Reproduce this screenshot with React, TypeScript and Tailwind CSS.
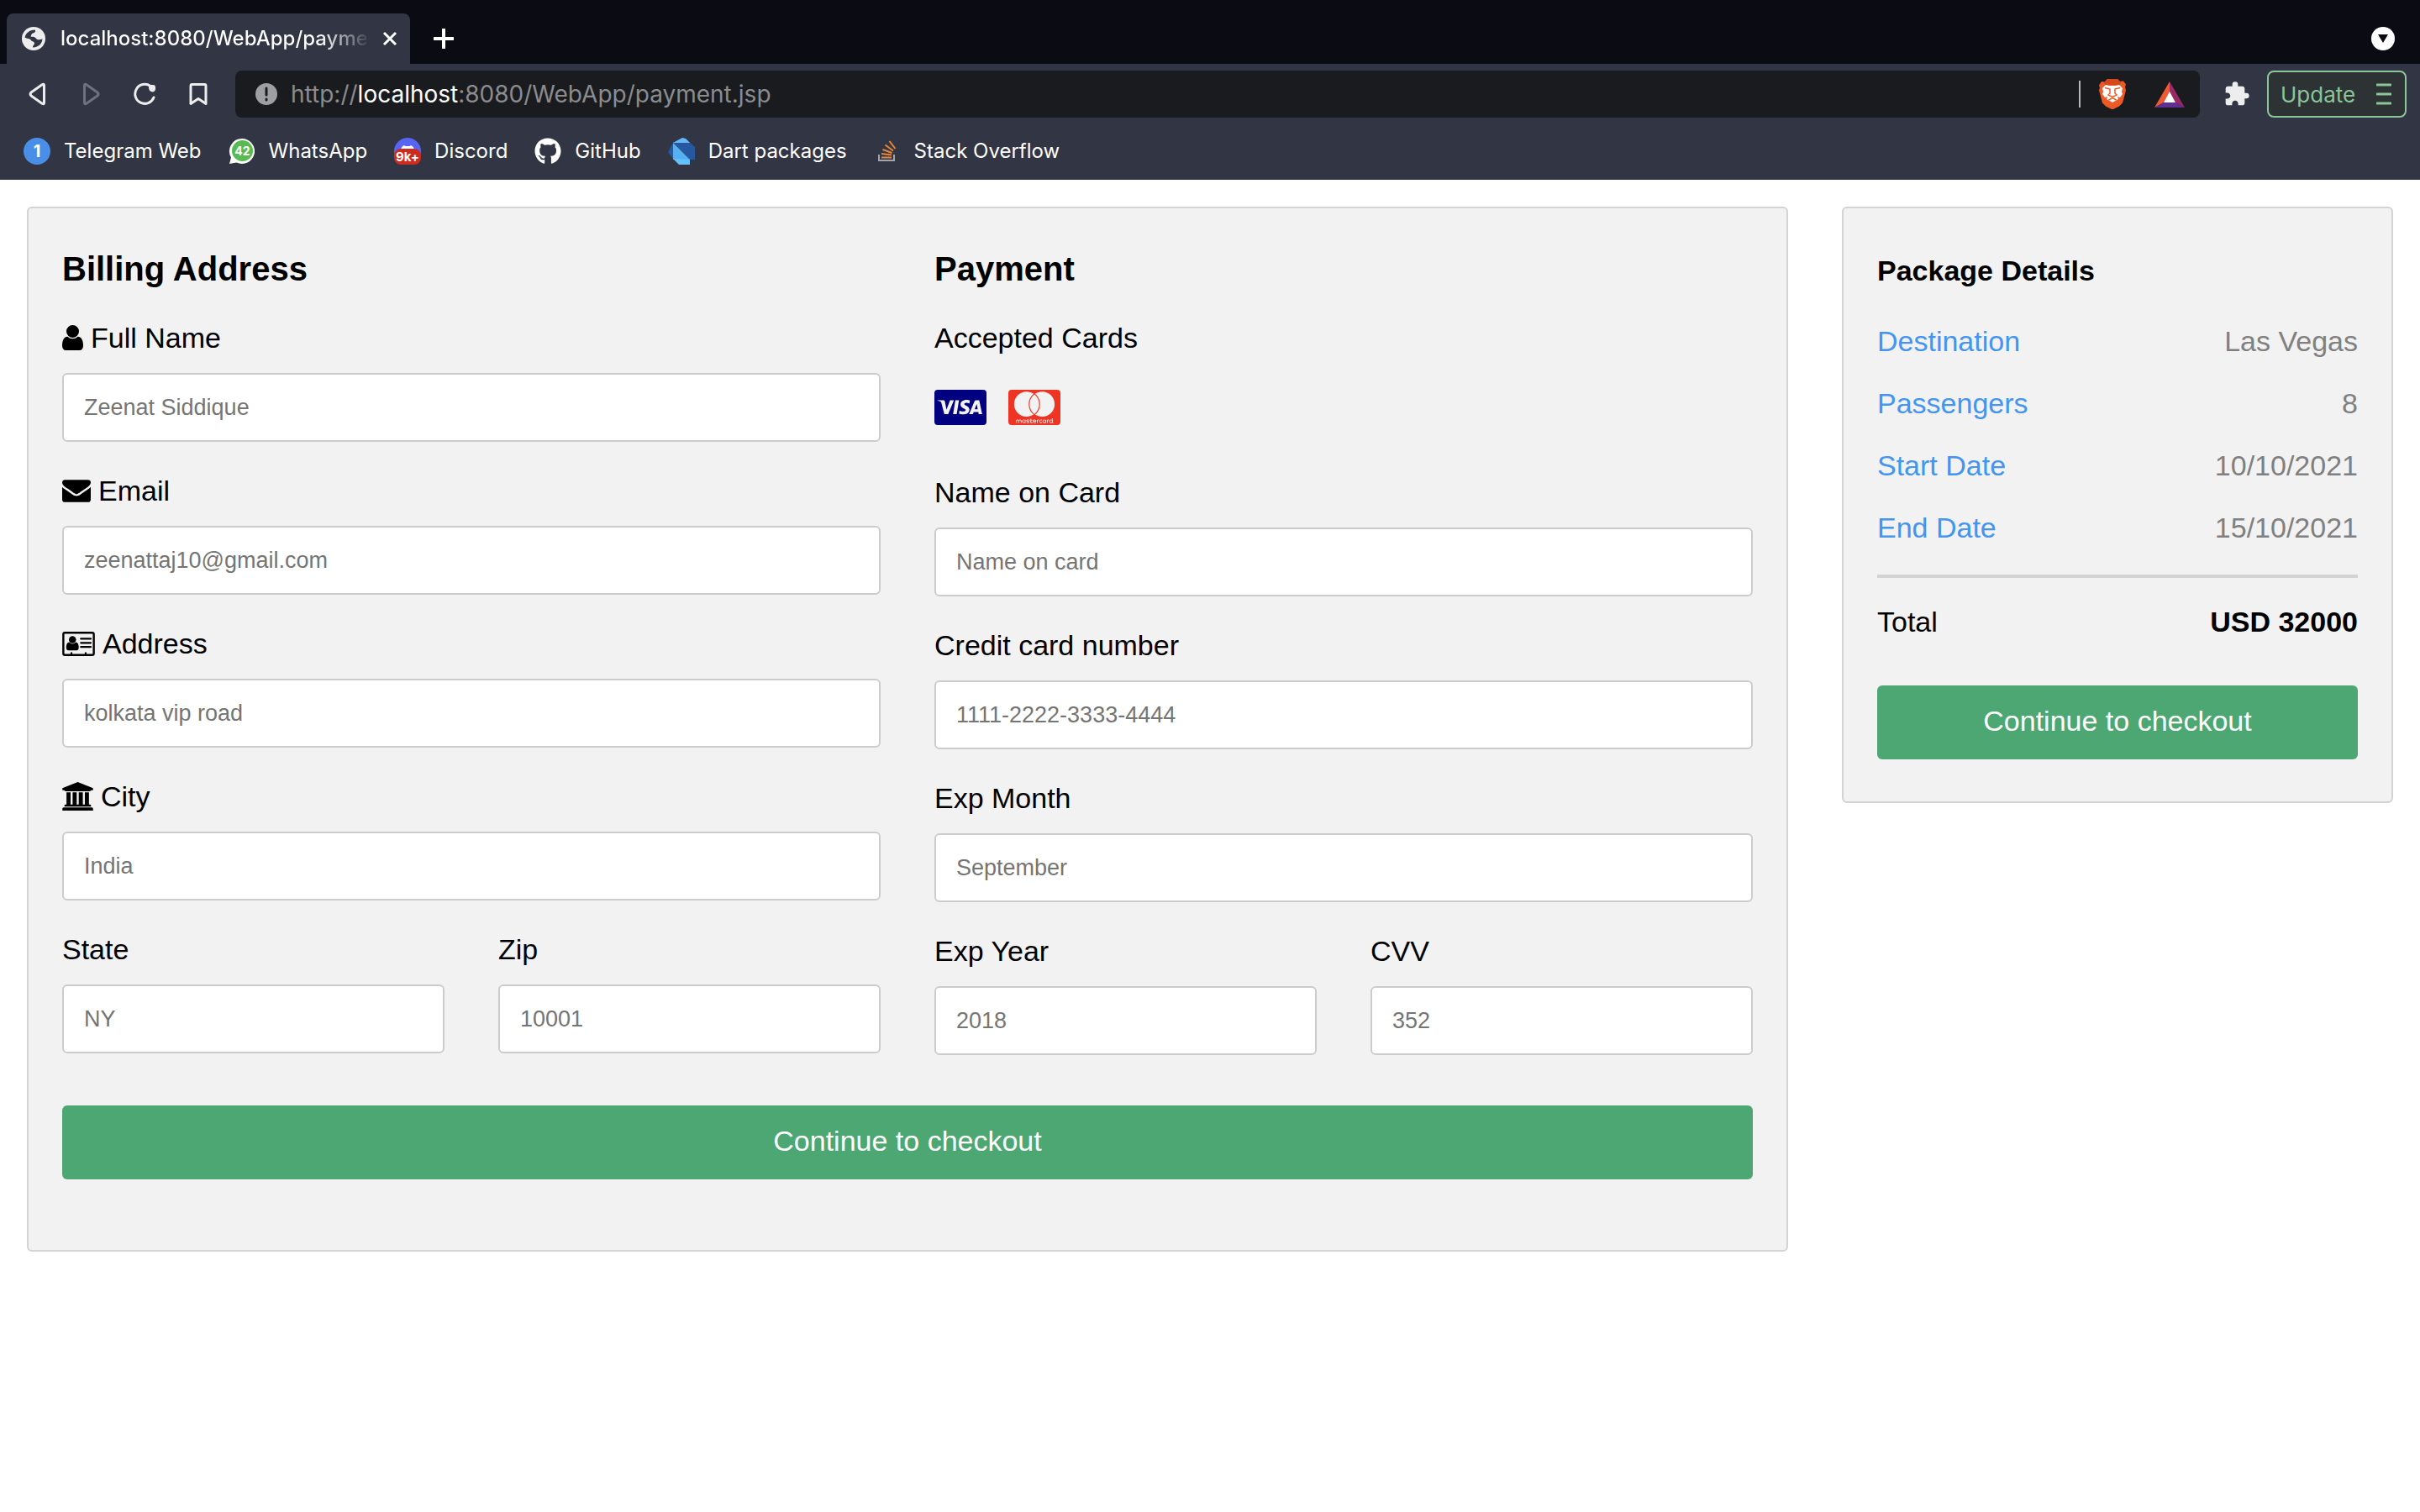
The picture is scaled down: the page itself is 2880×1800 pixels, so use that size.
import React from "react";
import { FaCcVisa, FaCcMastercard, FaGithub } from "react-icons/fa";
import { MdExtension } from "react-icons/md";

function UserIcon() {
  return (
    <svg viewBox="256 128 1280 1536" className="h-[30px] w-[25px]" aria-hidden="true">
      <path d="M1536 1399q0 109-62.5 187t-150.5 78h-854q-88 0-150.5-78t-62.5-187q0-85 8.5-160.5t31.5-152 58.5-131 94-89 134.5-34.5q131 128 313 128t313-128q76 0 134.5 34.5t94 89 58.5 131 31.5 152 8.5 160.5zm-256-887q0 159-112.5 271.5t-271.5 112.5-271.5-112.5-112.5-271.5 112.5-271.5 271.5-112.5 271.5 112.5 112.5 271.5z" />
    </svg>
  );
}

function EnvelopeIcon() {
  return (
    <svg viewBox="0 256 1792 1408" className="h-[27px] w-[34px]" aria-hidden="true">
      <path d="M1792 710v794q0 66-47 113t-113 47h-1472q-66 0-113-47t-47-113v-794q44 49 101 87 362 246 497 345 57 42 92.5 65.5t94.5 48 110 24.5h2q51 0 110-24.5t94.5-48 92.5-65.5q170-123 498-345 57-39 100-87zm0-294q0 79-49 151t-122 123q-376 261-468 325-10 7-42.5 31t-54 38.5-52 32.5-57.5 27-50 9h-2q-23 0-50-9t-57.5-27-52-32.5-54-38.5-42.5-31q-91-64-262-182.5t-205-142.5q-62-42-117-115.5t-55-136.5q0-78 41.500-130t118.500-52h1472q65 0 112.500 47t47.500 113z" />
    </svg>
  );
}

function AddressIcon() {
  return (
    <svg viewBox="0 0 2048 1536" className="h-[29px] w-[39px]" aria-hidden="true">
      <rect x="64" y="64" width="1920" height="1408" rx="96" fill="none" stroke="#000" strokeWidth="128" />
      <circle cx="640" cy="500" r="226" />
      <path d="M436 660q90 110 204 110t204-110q190 20 190 330 0 182-130 182h-528q-130 0-130-182 0-310 190-330z" />
      <path d="M1172 448h620M1172 704h620M1172 960h620" stroke="#000" strokeWidth="120" strokeLinecap="round" />
      <path d="M576 1300v140M1472 1300v140" stroke="#000" strokeWidth="110" />
    </svg>
  );
}

function BankIcon() {
  return (
    <svg viewBox="0 0 1920 1792" className="h-[34px] w-[37px]" aria-hidden="true">
      <path d="M960 0l960 384v128h-128q0 26-20.500 45t-48.500 19h-1526q-28 0-48.500-19t-20.500-45h-128v-128zm-704 640h256v768h128v-768h256v768h128v-768h256v768h128v-768h256v768h59q28 0 48.500 19t20.500 45v64h-1664v-64q0-26 20.500-45t48.500-19h59v-768zm1595 960q28 0 48.500 19t20.500 45v128h-1920v-128q0-26 20.500-45t48.500-19h1782z" />
    </svg>
  );
}

function Field({
  id,
  label,
  placeholder,
  icon,
}: {
  id: string;
  label: string;
  placeholder: string;
  icon?: React.ReactNode;
}) {
  return (
    <div className="min-w-0">
      <label htmlFor={id} className="mb-6 flex h-9 items-center gap-[9px] text-[34px] leading-9">
        {icon}
        {label}
      </label>
      <input
        id={id}
        type="text"
        placeholder={placeholder}
        className="mb-10 block h-[82px] w-full rounded-md border-2 border-[#cccccc] bg-white px-6 text-[27px] text-black placeholder:text-[#757575]"
      />
    </div>
  );
}

function CheckoutButton() {
  return (
    <button
      type="button"
      className="block h-[88px] w-full rounded-md bg-[#4ca773] pb-1 text-center text-[34px] text-white"
    >
      Continue to checkout
    </button>
  );
}

function GlobeIcon() {
  return (
    <svg viewBox="0 0 28 28" className="size-7 shrink-0" aria-hidden="true">
      <circle cx="14" cy="14" r="14" fill="#ededee" />
      <path
        d="M3.500 12.500C5 7 9 4 15.500 3.500C17 5 15.500 7 13 7.500C11 8 11.500 10 10.500 11.500C13 12 16 11.500 17 14C19 16 21 15 24.500 14.500C24 20 20 24 13.500 24.500C12 23 15 21.500 15 19.500C15 17 12 18 11 16C10 13.500 6 14.500 3.500 12.500z"
        fill="#323543"
      />
    </svg>
  );
}

function TelegramBadge() {
  return (
    <span className="flex size-8 items-center justify-center rounded-full bg-[#4a8fe7] text-xl font-bold">1</span>
  );
}

function WhatsAppBadge() {
  return (
    <svg viewBox="0 0 32 32" className="size-8" aria-hidden="true">
      <path d="M16 1a15 15 0 1 1-6.500 28.500L1 31l2-7.500A15 15 0 0 1 16 1z" fill="#fff" />
      <circle cx="16.500" cy="15.500" r="12.500" fill="#57bb52" />
      <text x="16.500" y="20.500" textAnchor="middle" fontSize="14" fontWeight="700" fill="#fff">42</text>
    </svg>
  );
}

function DiscordBadge() {
  return (
    <svg viewBox="0 0 32 32" className="size-8" aria-hidden="true">
      <circle cx="16" cy="16" r="16" fill="#5865f2" />
      <path d="M8 14q1-4 4-5l1.500 1h5L20 9q3 1 4 5z" fill="#fff" />
      <rect x="0" y="13" width="32" height="19" rx="8" fill="#cc2b20" />
      <text x="16" y="28" textAnchor="middle" fontSize="15" fontWeight="700" fill="#fff">9k+</text>
    </svg>
  );
}

function DartIcon() {
  return (
    <svg viewBox="0 0 32 32" className="size-8" aria-hidden="true">
      <path d="M6 6l11-6 4 1 11 10v15h-6z" fill="#25589f" />
      <path d="M6 6L0 17l6 8z" fill="#25589f" />
      <path d="M6 6l20 20H6z" fill="#55b0f0" />
      <path d="M6 6l11-6 4 1 5 5z" fill="#66b9f5" />
      <path d="M6 25l7 7h13v-6z" fill="#66c0fb" />
    </svg>
  );
}

function StackOverflowIcon() {
  return (
    <svg viewBox="0 0 32 32" className="size-8" aria-hidden="true">
      <path d="M6 20v7h18v-7" fill="none" stroke="#a3a5ad" strokeWidth="2" />
      <path d="M9 23.500h12M9 19l12 1.500M10.500 14l11 4M13.500 8.500l9.500 7M18.500 4l7 9" stroke="#e8873a" strokeWidth="2" />
    </svg>
  );
}

const bookmarks = [
  { name: "Telegram Web", icon: <TelegramBadge /> },
  { name: "WhatsApp", icon: <WhatsAppBadge /> },
  { name: "Discord", icon: <DiscordBadge /> },
  { name: "GitHub", icon: <FaGithub className="size-8" /> },
  { name: "Dart packages", icon: <DartIcon /> },
  { name: "Stack Overflow", icon: <StackOverflowIcon /> },
];

function BrowserChrome() {
  return (
    <header className="bg-[#323543] font-['Inter',sans-serif] text-white">
      <div className="flex h-[76px] items-end justify-between bg-[#0b0b14] pl-2 pr-[30px]">
        <div className="flex items-center">
          <div className="mt-4 flex h-[60px] w-[480px] items-center rounded-t-lg bg-[#323543] pl-[18px] pr-2.5">
            <GlobeIcon />
            <span className="ml-[18px] w-[366px] overflow-hidden whitespace-nowrap bg-linear-to-r from-white from-85% to-white/10 bg-clip-text text-2xl font-medium text-transparent">
              localhost:8080/WebApp/payment.jsp
            </span>
            <button type="button" aria-label="Close tab" className="ml-3.5 p-1">
              <svg viewBox="0 0 20 20" className="size-5" aria-hidden="true">
                <path d="M3 3l14 14M17 3L3 17" stroke="#fff" strokeWidth="3" />
              </svg>
            </button>
          </div>
          <button type="button" aria-label="New tab" className="ml-7 mt-4">
            <svg viewBox="0 0 24 24" className="size-6" aria-hidden="true">
              <path d="M12 1v22M1 12h22" stroke="#fff" strokeWidth="4" strokeLinecap="round" />
            </svg>
          </button>
        </div>
        <button type="button" aria-label="Search tabs" className="mb-4 flex size-7 items-center justify-center rounded-full bg-white">
          <svg viewBox="0 0 12 10" className="h-2.5 w-3" aria-hidden="true">
            <path d="M0 0h12L6 10z" fill="#0b0b14" />
          </svg>
        </button>
      </div>

      <div className="flex h-18 items-center pl-[30px] pr-4">
        <button type="button" aria-label="Back">
          <svg viewBox="0 0 28 28" className="size-7" aria-hidden="true">
            <path d="M22.500 3.500v21q0 2-2 1L7 16q-2-2 0-4l13.500-9.500q2-1 2 1z" fill="none" stroke="#ededee" strokeWidth="3" strokeLinejoin="round" />
          </svg>
        </button>
        <button type="button" aria-label="Forward" className="ml-9">
          <svg viewBox="0 0 28 28" className="size-7" aria-hidden="true">
            <path d="M6.500 3.500v21q0 2 2 1L22 16q2-2 0-4L8.500 2.500q-2-1-2 1z" fill="none" stroke="#6f717b" strokeWidth="3" strokeLinejoin="round" />
          </svg>
        </button>
        <button type="button" aria-label="Reload" className="ml-9">
          <svg viewBox="0 0 28 28" className="size-7" aria-hidden="true">
            <path d="M25 18A11.500 11.500 0 1 1 21 4.500" fill="none" stroke="#ededee" strokeWidth="3" strokeLinecap="round" />
            <path d="M19 6.500q0-3 3-3.500h2q3 0 3 3v1.500q0 3.500-3.500 4Q19.500 11 19 6.500z" fill="#ededee" />
          </svg>
        </button>
        <button type="button" aria-label="Bookmark this page" className="ml-9">
          <svg viewBox="0 0 28 28" className="size-7" aria-hidden="true">
            <path d="M6.500 2.500h15q1.500 0 1.500 1.500v21.500l-9-6-9 6V4q0-1.500 1.500-1.500z" fill="none" stroke="#ededee" strokeWidth="3" strokeLinejoin="round" />
          </svg>
        </button>
        <div className="ml-[30px] flex h-14 min-w-0 flex-1 items-center rounded-lg bg-[#1a1b1f] pl-6 pr-[18px]">
          <svg viewBox="0 0 26 26" className="size-[26px] shrink-0" aria-hidden="true">
            <circle cx="13" cy="13" r="13" fill="#9c9fa4" />
            <path d="M13 6v8M13 19v1" stroke="#1a1b1f" strokeWidth="3" strokeLinecap="round" />
          </svg>
          <a href="http://localhost:8080/WebApp/payment.jsp" className="ml-4 flex-1 truncate text-[28px] text-[#8b8c8f]">
            http://<span className="text-white">localhost</span>:8080/WebApp/payment.jsp
          </a>
          <span className="h-8 w-0.5 bg-[#b5b5b8]" />
          <svg viewBox="0 0 32 36" className="ml-[22px] h-9 w-8" aria-hidden="true">
            <path d="M10 0h12l3 3 4-.5 3 4-1 3 1 4-4 15-4 4-8 4-8-4-4-4L0 13.500l1-3-1-3 3-4.500 4 .5z" fill="#ee5a26" />
            <path d="M10 0h12l4 4-1 3H7L6 4z" fill="#d4481c" />
            <path d="M4 11l4-4 4 1h8l4-1 4 4-1 4 1 3-3 4-3-1 1 3-7 4-7-4 1-3-3 1-3-4 1-3z" fill="#fff" />
            <path d="M7 10.500l6 1.500v5l-2 2 5 2.500 5-2.500-2-2v-5l6-1.500M11.500 25l4.500-2.500 4.500 2.500" fill="none" stroke="#ee5a26" strokeWidth="1.500" />
          </svg>
          <svg viewBox="0 0 36 31" className="ml-[34px] h-[31px] w-9" aria-hidden="true">
            <path d="M18 0L0 31l11-6 7-12z" fill="#ee5a33" />
            <path d="M18 0l18 31-11-6-7-12z" fill="#972a62" />
            <path d="M0 31h36l-11-6H11z" fill="#5f2f92" />
            <path d="M18 12l7 13H11z" fill="#fff" />
          </svg>
        </div>
        <button type="button" aria-label="Extensions" className="ml-7">
          <MdExtension className="size-8 text-[#ededee]" />
        </button>
        <button
          type="button"
          className="ml-5 flex h-14 w-[166px] items-center justify-between rounded-lg border-2 border-[#8cc597] bg-[#2d3234] pl-3.5 pr-4 text-[26px] text-[#8cc597]"
        >
          Update
          <svg viewBox="0 0 18 26" className="h-[26px] w-[18px]" aria-hidden="true">
            <path d="M1 2h16M1 13h16M1 24h16" stroke="#8cc597" strokeWidth="3" strokeLinecap="round" />
          </svg>
        </button>
      </div>

      <nav className="flex h-[66px] items-center gap-8 pb-0.5 pl-7">
        {bookmarks.map((b) => (
          <a key={b.name} href="#" className="flex items-center gap-4 whitespace-nowrap text-2xl">
            {b.icon}
            {b.name}
          </a>
        ))}
      </nav>
    </header>
  );
}

const details = [
  { name: "Destination", value: "Las Vegas" },
  { name: "Passengers", value: "8" },
  { name: "Start Date", value: "10/10/2021" },
  { name: "End Date", value: "15/10/2021" },
];

export default function App() {
  return (
    <div className="min-h-screen bg-white">
      <BrowserChrome />
      <main className="flex items-start pt-8 font-['Liberation_Sans',Arial,sans-serif] text-black">
        <div className="w-3/4 px-8">
          <form className="rounded-md border-2 border-[#d3d3d3] bg-[#f2f2f2] px-10 pb-[84px] pt-12">
            <div className="grid grid-cols-2 gap-16">
              <section>
                <h3 className="mb-10 text-[40px] leading-12 font-bold">Billing Address</h3>
                <Field id="name" label="Full Name" placeholder="Zeenat Siddique" icon={<UserIcon />} />
                <Field id="email" label="Email" placeholder="zeenattaj10@gmail.com" icon={<EnvelopeIcon />} />
                <Field id="address" label="Address" placeholder="kolkata vip road" icon={<AddressIcon />} />
                <Field id="city" label="City" placeholder="India" icon={<BankIcon />} />
                <div className="grid grid-cols-2 gap-16">
                  <Field id="state" label="State" placeholder="NY" />
                  <Field id="zip" label="Zip" placeholder="10001" />
                </div>
              </section>
              <section>
                <h3 className="mb-10 text-[40px] leading-12 font-bold">Payment</h3>
                <p className="mb-11 text-[34px] leading-9">Accepted Cards</p>
                <div className="mb-[62px] flex gap-[26px]">
                  <span className="flex h-[42px] w-[62px] items-center justify-center overflow-hidden rounded-sm">
                    <FaCcVisa className="size-[62px] shrink-0 text-[#000080]" />
                  </span>
                  <span className="flex h-[42px] w-[62px] items-center justify-center overflow-hidden rounded-sm">
                    <FaCcMastercard className="size-[62px] shrink-0 text-[#ee3524]" />
                  </span>
                </div>
                <Field id="cname" label="Name on Card" placeholder="Name on card" />
                <Field id="ccnum" label="Credit card number" placeholder="1111-2222-3333-4444" />
                <Field id="expmonth" label="Exp Month" placeholder="September" />
                <div className="grid grid-cols-2 gap-16">
                  <Field id="expyear" label="Exp Year" placeholder="2018" />
                  <Field id="cvv" label="CVV" placeholder="352" />
                </div>
              </section>
            </div>
            <div className="mt-5">
              <CheckoutButton />
            </div>
          </form>
        </div>

        <aside className="w-1/4 px-8">
          <div className="rounded-md border-2 border-[#d3d3d3] bg-[#f2f2f2] px-10 pb-[50px] pt-[54px]">
            <h4 className="text-[34px] leading-10 font-bold">Package Details</h4>
            <dl className="mt-11 flex flex-col gap-[34px] text-[34px] leading-10">
              {details.map((d) => (
                <div key={d.name} className="flex justify-between">
                  <dt>
                    <a href="#" className="text-[#4495f0]">{d.name}</a>
                  </dt>
                  <dd className="text-[#808080]">{d.value}</dd>
                </div>
              ))}
            </dl>
            <hr className="mb-8 mt-9 border-t-4 border-[#d3d3d3]" />
            <p className="mb-14 flex justify-between text-[34px] leading-10">
              Total <b>USD 32000</b>
            </p>
            <CheckoutButton />
          </div>
        </aside>
      </main>
    </div>
  );
}
